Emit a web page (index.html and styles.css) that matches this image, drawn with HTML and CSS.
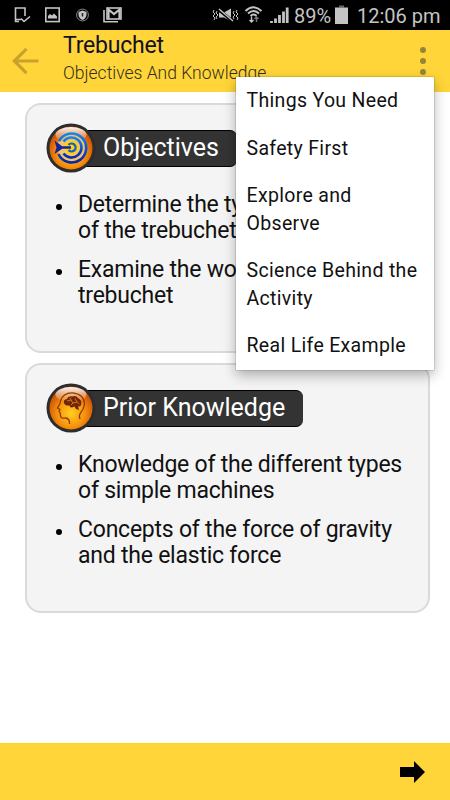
FILE: index.html
```html
<!DOCTYPE html>
<html lang="en">

<head>
    <meta charset="UTF-8">
    <meta name="viewport" content="width=device-width, initial-scale=1.0">
    <title>Trebuchet</title>
    <link rel="stylesheet" href="styles.css">
</head>

<body>
    <div class="status-bar">
        <svg class="notifications" width="124" height="30" viewBox="0 0 124 30" fill="none" stroke="#c4c4c4" stroke-width="1.6">
            <path d="M19 21.500H15.500V8H25V16M16 19.500H21M21 18.500L24 21.500L30 16.500"/>
            <rect x="45.800" y="8" width="13.400" height="13.600"/>
            <path d="M48 18.500V16L50 14L52 15.500L54 13.500L57 16.500V18.500Z" fill="#c4c4c4" stroke="none"/>
            <circle cx="82.500" cy="15" r="5.900" stroke-width="1" stroke="#888"/>
            <path d="M82.500 10.500L86.500 12V15Q86 18.500 82.500 20Q79 18.500 78.500 15V12Z" fill="#c4c4c4" stroke="none"/>
            <path d="M82.500 13V16.500" stroke="#222" stroke-width="1.500"/>
            <path d="M104 10V21.700H118"/>
            <rect x="107" y="8" width="14" height="11"/>
            <path d="M108.500 19V9.500L114 14L119.500 9.500V19" stroke-width="2.200"/>
        </svg>
        <div class="status-right">
            <svg width="80" height="30" viewBox="0 0 80 30" fill="none" stroke="#c4c4c4" stroke-width="1">
                <path d="M2 10L1 12L3 14L1 16L3 18L2 20M5 11L4 13L6 15L4 17L5 19M22 11L21 13L23 15L21 17L22 19M25 10L24 12L26 14L24 16L26 18L25 20"/>
                <path d="M7 12.500H12L19 8.500V21L12 17.500H7Z" fill="#c4c4c4" stroke="none"/>
                <path d="M6.500 9.500L21 21.500" stroke="#000" stroke-width="3"/>
                <path d="M7 9L21 21" stroke-width="1.500"/>
                <path d="M33.500 11Q41.500 3.500 49.500 11M36 13.500Q41.500 8.500 47 13.500M38.500 16Q41.500 13 44.500 16" stroke-width="2"/>
                <path d="M39.500 16.500V22M37.500 20L39.500 22L41.500 20" stroke-width="1.400"/>
                <path d="M44.500 22V17M42.500 19L44.500 17L46.500 19" stroke="#777" stroke-width="1.400"/>
                <path d="M59.500 23V21M63.500 23V18.500M67.500 23V15M71.500 23V11.500M75.200 23V7.500" stroke-width="2.800"/>
            </svg>
            <span class="battery-level">89%</span>
            <svg class="battery" width="13" height="30" viewBox="0 0 13 30">
                <path d="M4 5.500H9V7.500H4Z" fill="#666"/>
                <path d="M0 7.500H13V24H0Z" fill="#c4c4c4"/>
            </svg>
            <span class="clock">12:06 pm</span>
        </div>
    </div>

    <header class="toolbar">
        <svg class="back" width="28" height="28" viewBox="0 0 28 28" fill="none" stroke="#c9a22e" stroke-width="3.200">
            <path d="M27.500 14H4M15.500 1.800L3.300 14L15.500 26.200"/>
        </svg>
        <div class="heading">
            <h1>Trebuchet</h1>
            <p>Objectives And Knowledge</p>
        </div>
        <div class="more">
            <span></span>
            <span></span>
            <span></span>
        </div>
    </header>

    <main class="content">
        <section class="card">
            <div class="card-title">
                <svg class="card-icon" width="50" height="50" viewBox="0 0 50 50">
                    <defs>
                        <radialGradient id="orange" cx="50%" cy="62%" r="58%">
                            <stop offset="0" stop-color="#ffcf20"/>
                            <stop offset="0.550" stop-color="#f8920c"/>
                            <stop offset="1" stop-color="#c84c05"/>
                        </radialGradient>
                        <linearGradient id="shine" x1="0" y1="0" x2="0" y2="1">
                            <stop offset="0" stop-color="#fff" stop-opacity="0.950"/>
                            <stop offset="1" stop-color="#fff" stop-opacity="0"/>
                        </linearGradient>
                        <linearGradient id="rings" x1="0" y1="0" x2="0" y2="1">
                            <stop offset="0" stop-color="#1687ee"/>
                            <stop offset="1" stop-color="#0725a8"/>
                        </linearGradient>
                    </defs>
                    <circle cx="25" cy="25" r="24.500" fill="#2d2d2d"/>
                    <circle cx="25" cy="25" r="21.500" fill="url(#orange)"/>
                    <ellipse cx="25" cy="11.500" rx="15.500" ry="7.500" fill="url(#shine)"/>
                    <circle cx="25.500" cy="24.500" r="14" fill="#f2c46e"/>
                    <g fill="none" stroke="url(#rings)" stroke-width="2.600">
                        <path d="M13 18A14.500 14.500 0 1 1 12.500 31"/>
                        <path d="M17.500 18.500A10 10 0 1 1 17.500 30.500"/>
                    </g>
                    <circle cx="25.500" cy="24.500" r="7" fill="#ffd20e"/>
                    <path d="M22.500 22A4 4 0 1 1 22.500 27" fill="none" stroke="#1260cf" stroke-width="2.200"/>
                    <path d="M8.500 17.500L14.500 22L16 23.300H25V25.700H16L14.500 27L8.500 31L10.500 24.500Z" fill="#14239a"/>
                </svg>
                <h2>Objectives</h2>
            </div>
            <ul>
                <li>Determine the ty<br>of the trebuchet</li>
                <li>Examine the wo<br>trebuchet</li>
            </ul>
        </section>

        <section class="card">
            <div class="card-title">
                <svg class="card-icon" width="50" height="50" viewBox="0 0 50 50">
                    <circle cx="25" cy="25" r="24.500" fill="#2d2d2d"/>
                    <circle cx="25" cy="25" r="21.500" fill="url(#orange)"/>
                    <ellipse cx="25" cy="11.500" rx="15.500" ry="7.500" fill="url(#shine)"/>
                    <path d="M23.500 41Q24 36 20 35Q14 36 14.500 32L14 29.500L13 28L14 26.500L11.500 25Q14.500 21 14.500 18Q17 9.500 26.500 9.800Q38 11 38.500 21Q38 26 34.500 30Q32.500 33 34 36" fill="none" stroke="#8d3b09" stroke-width="1.300"/>
                    <path d="M18 20Q17 16.500 21 16Q22 12.500 26 13.500Q30 12 32 15Q36 17 35.300 21Q35 24 32 23.500L33 27L30 26L28.500 23.500Q24 26 23.500 22.500Q19 23 18 20Z" fill="#71250a"/>
                    <path d="M21 18L25 17L24 14.500M25 17L27 20L31 19L29 15.500M27 20L25 22M31 19L33.500 21" fill="none" stroke="#dc8012" stroke-width="0.900"/>
                </svg>
                <h2>Prior Knowledge</h2>
            </div>
            <ul>
                <li>Knowledge of the different types<br>of simple machines</li>
                <li>Concepts of the force of gravity<br>and the elastic force</li>
            </ul>
        </section>
    </main>

    <footer class="footer">
        <svg width="25" height="22" viewBox="0 0 25 22">
            <path d="M0 6H14V0L25 11L14 22V16H0Z" fill="#000"/>
        </svg>
    </footer>

    <nav class="menu">
        <a>Things You Need</a>
        <a>Safety First</a>
        <a>Explore and<br>Observe</a>
        <a>Science Behind the<br>Activity</a>
        <a>Real Life Example</a>
    </nav>
</body>

</html>
```

FILE: styles.css
```css
* {
    box-sizing: border-box;
}

body {
    margin: 0;
    height: 800px;
    display: flex;
    flex-direction: column;
    position: relative;
    overflow: hidden;
    background-color: #fff;
    font-family: Roboto, sans-serif;
    color: #111;
}

h1,
h2,
p,
ul {
    margin: 0;
    padding: 0;
    font-weight: 400;
}

svg {
    display: block;
    flex-shrink: 0;
}

.status-bar {
    height: 30px;
    display: flex;
    justify-content: space-between;
    background-color: #000;
    color: #c4c4c4;
}

.status-right {
    display: flex;
    padding-right: 10px;
    font-size: 20px;
    line-height: 32px;
    white-space: nowrap;
}

.battery-level {
    width: 37px;
    margin-left: 2px;
}

.battery {
    margin-left: 4px;
}

.clock {
    width: 83px;
    margin-left: 9px;
}

.toolbar {
    height: 62px;
    display: flex;
    background-color: #ffd539;
}

.back {
    margin: 17px 0 0 11px;
}

.heading {
    flex: 1;
    padding-left: 24px;
}

.heading h1 {
    font-size: 23px;
    line-height: 32px;
    letter-spacing: -0.2px;
    color: #111122;
}

.heading p {
    font-size: 17.5px;
    font-weight: 300;
    line-height: 23px;
    color: #33301a;
}

.more {
    display: flex;
    flex-direction: column;
    gap: 5px;
    padding: 17px 24px 0 0;
}

.more span {
    width: 6px;
    height: 6px;
    border-radius: 50%;
    background-color: #978536;
}

.content {
    flex: 1;
    display: flex;
    flex-direction: column;
    gap: 10px;
    padding: 10.5px 20px 0 25px;
}

.card {
    height: 250px;
    padding: 18.5px 19px;
    border: 2px solid #dadada;
    border-radius: 16px;
    background-color: #f4f4f4;
}

.card-title {
    display: flex;
    align-items: center;
    height: 50px;
}

.card-title h2 {
    height: 37px;
    margin-left: -25px;
    padding: 0 18px 0 32px;
    border-top: 1px solid #000;
    border-bottom: 1px solid #000;
    border-radius: 0 7px 7px 0;
    background-color: #333;
    color: #fff;
    font-size: 25px;
    line-height: 34px;
    white-space: nowrap;
}

.card-icon {
    position: relative;
    left: -0.5px;
    top: -0.5px;
}

.card ul {
    padding: 18.5px 0 0 32px;
    list-style: none;
    white-space: nowrap;
    font-size: 23px;
    line-height: 26px;
    letter-spacing: -0.23px;
}

.card li {
    display: flow-root;
    margin-bottom: 13px;
}

.card li::before {
    content: "";
    float: left;
    width: 6px;
    height: 6px;
    margin: 12px 0 0 -22px;
    border-radius: 50%;
    background-color: #000;
}

.footer {
    height: 57px;
    display: flex;
    align-items: center;
    justify-content: flex-end;
    padding-right: 25px;
    border-top: 1px solid #ffd51a;
    background-color: #ffd539;
}

.menu {
    position: absolute;
    top: 77px;
    left: 236px;
    width: 198px;
    background-color: #fff;
    box-shadow: 0 0 1px rgba(0, 0, 0, 0.6), 0 5px 12px rgba(0, 0, 0, 0.3);
}

.menu a {
    display: block;
    padding: 10px 0 10px 10.5px;
    font-size: 19.5px;
    line-height: 27.5px;
    letter-spacing: 0.32px;
    white-space: nowrap;
}
```
